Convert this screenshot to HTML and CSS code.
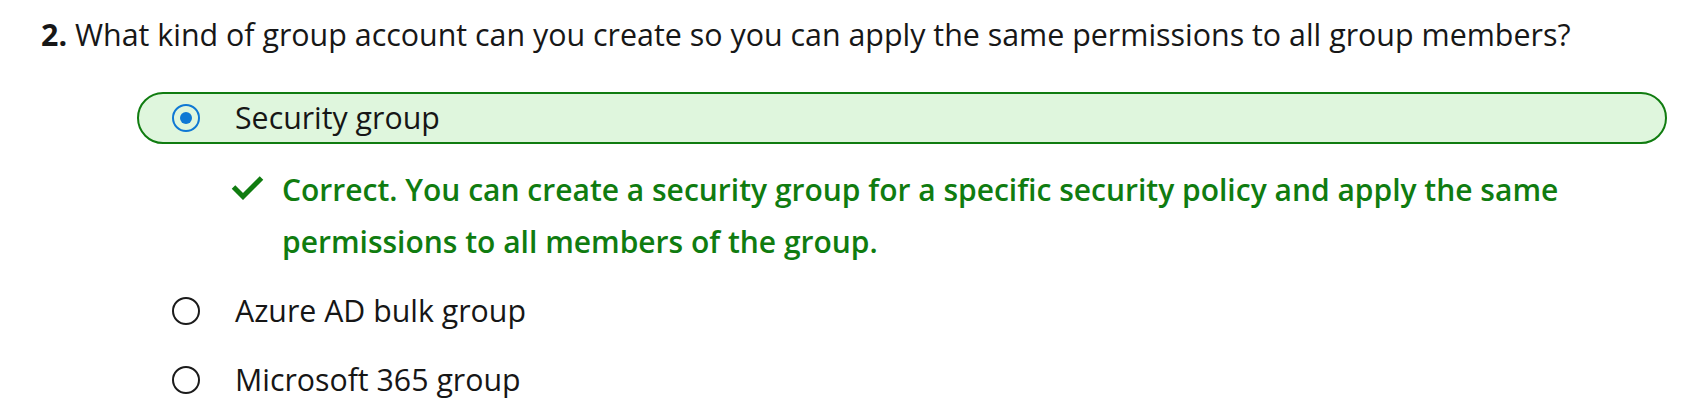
FILE: index.html
```html
<!DOCTYPE html>
<html lang="en">
<head>
<meta charset="utf-8">
<title>Quiz question</title>
<link rel="stylesheet" href="styles.css">
</head>
<body>
<main class="page">
  <p class="question"><span class="qnum">2.</span> What kind of group account can you create so you can apply the same permissions to all group members?</p>
  <div class="options">
    <div class="option option-selected">
      <span class="radio radio-checked"><span class="dot"></span></span>
      <span class="label">Security group</span>
    </div>
    <div class="feedback">
      <svg class="check" width="33" height="25" viewBox="0 0 33 25" aria-hidden="true">
        <polyline points="2.5,12 12,21.5 30.5,3" fill="none" stroke="#107c10" stroke-width="5" stroke-linecap="butt" stroke-linejoin="miter"/>
      </svg>
      <p class="feedback-text">Correct. You can create a security group for a specific security policy and apply the same permissions to all members of the group.</p>
    </div>
    <div class="option">
      <span class="radio"></span>
      <span class="label">Azure AD bulk group</span>
    </div>
    <div class="option">
      <span class="radio"></span>
      <span class="label">Microsoft 365 group</span>
    </div>
  </div>
</main>
</body>
</html>
```
FILE: styles.css
```css
html, body {
  margin: 0;
  padding: 0;
  background: #ffffff;
}

body {
  font-family: "Open Sans", "Noto Sans", sans-serif;
  color: #171717;
}

.page {
  padding: 14px 35px 0 41px;
}

.question {
  margin: 0;
  font-size: 30.4px;
  line-height: 42.5px;
  color: #171717;
}

.qnum {
  font-weight: 700;
}

.options {
  margin-top: 35px;
  margin-left: 96px;
  display: flex;
  flex-direction: column;
  gap: 17px;
}

.option {
  height: 52px;
  box-sizing: border-box;
  border: 2px solid transparent;
  border-radius: 26px;
  display: flex;
  align-items: center;
  padding-left: 33px;
  gap: 35px;
}

.option-selected {
  background: #dff6dd;
  border-color: #107c10;
}

.radio {
  width: 28px;
  height: 28px;
  flex: none;
  box-sizing: border-box;
  border: 2px solid #1b1b1b;
  border-radius: 50%;
  display: flex;
  align-items: center;
  justify-content: center;
}

.radio-checked {
  border-color: #0f78d4;
  border-width: 2.3px;
}

.dot {
  width: 12px;
  height: 12px;
  border-radius: 50%;
  background: #0f78d4;
}

.label {
  font-size: 30.3px;
  line-height: 40px;
  color: #161616;
}

.feedback {
  margin: 3px 0 0 94px;
  display: flex;
  align-items: flex-start;
  gap: 18px;
}

.check {
  flex: none;
  margin-top: 11px;
}

.feedback-text {
  margin: 0;
  font-size: 30px;
  font-weight: 600;
  line-height: 52px;
  color: #107c10;
  max-width: 1320px;
}
```
